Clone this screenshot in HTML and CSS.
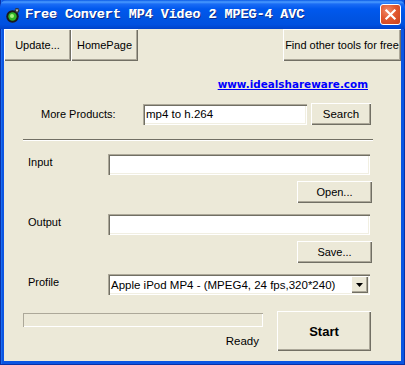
FILE: index.html
```html
<!DOCTYPE html>
<html lang="en">
<head>
  <meta charset="UTF-8">
  <title>Free Convert MP4 Video 2 MPEG-4 AVC</title>
  <link rel="stylesheet" href="styles.css">
</head>
<body>
  <div class="window">
    <div class="title-bar">
      <svg class="app-icon" width="16" height="16" viewBox="0 0 16 16">
        <circle cx="7.5" cy="9.5" r="6.2" fill="#1a1a1a"/>
        <circle cx="7.5" cy="9.5" r="4.2" fill="#2fb52a"/>
        <circle cx="7" cy="9" r="2" fill="#a6f27e"/>
        <circle cx="12" cy="3.5" r="2.4" fill="#333"/>
        <path d="M10.5 2.5 L13.5 2.5 L12 5 Z" fill="#c9c9c9"/>
      </svg>
      <span class="title-text">Free Convert MP4 Video 2 MPEG-4 AVC</span>
      <span class="close-btn">
        <svg width="21" height="21" viewBox="0 0 21 21">
          <path d="M6 6 L15 15 M15 6 L6 15" stroke="#fff" stroke-width="2.4" stroke-linecap="square"/>
        </svg>
      </span>
    </div>
    <div class="client">
      <div class="toolbar">
        <button class="btn tb-update">Update...</button>
        <button class="btn tb-home">HomePage</button>
        <button class="btn tb-find">Find other tools for free</button>
      </div>
      <div class="link-row">
        <a class="site-link" href="#">www.idealshareware.com</a>
      </div>
      <div class="products-row">
        <span class="products-label">More Products:</span>
        <div class="field products-field">mp4 to h.264</div>
        <button class="btn search-btn">Search</button>
      </div>
      <div class="separator"></div>

      <div class="file-row">
        <span class="row-label">Input</span>
        <div class="field file-field"></div>
      </div>
      <div class="action-row">
        <button class="btn action-btn">Open...</button>
      </div>

      <div class="file-row gap-top">
        <span class="row-label">Output</span>
        <div class="field file-field"></div>
      </div>
      <div class="action-row">
        <button class="btn action-btn">Save...</button>
      </div>

      <div class="file-row gap-top">
        <span class="row-label">Profile</span>
        <div class="field select-field">
          <span class="select-text">Apple iPod MP4 - (MPEG4, 24 fps,320*240)</span>
          <span class="select-arrow">
            <svg width="7" height="4" viewBox="0 0 7 4"><path d="M0 0 H7 L3.5 4 Z" fill="#000"/></svg>
          </span>
        </div>
      </div>

      <div class="bottom-row">
        <div class="status-col">
          <div class="progress"></div>
          <div class="status-text">Ready</div>
        </div>
        <button class="btn start-btn">Start</button>
      </div>
    </div>
  </div>
</body>
</html>
```

FILE: styles.css
```css
body {
  margin: 0;
  background: #fff;
  font-family: "Liberation Sans", Arial, sans-serif;
  font-size: 11px;
  color: #000;
}
.window {
  width: 405px;
  height: 365px;
  background: #0b55e2;
  box-shadow: inset 1px 0 #0831a8, inset -1px 0 #0831a8, inset 0 -1px #0831a8, inset 2px 0 #1a6cf0;
  display: flex;
  flex-direction: column;
}
.title-bar {
  height: 29px;
  flex: none;
  display: flex;
  align-items: center;
  padding: 0 5px 0 5px;
  background: linear-gradient(to bottom, #0a5ae6 0, #4a9bff 2px, #1a6cf5 4px, #0058ee 9px, #0054e3 60%, #0050e0 85%, #0042c9 100%);
  border-radius: 7px 7px 0 0;
  user-select: none;
}
.app-icon {
  flex: none;
  margin-top: 1px;
}
.title-text {
  margin-left: 4px;
  font-family: "Liberation Mono", "Courier New", monospace;
  font-weight: bold;
  font-size: 13.3px;
  color: #fff;
  text-shadow: 1px 1px 0 #0a2a8a, 0.5px 0 0 #fff;
  white-space: nowrap;
}
.close-btn {
  margin-left: auto;
  margin-right: -1px;
  margin-top: -1px;
  width: 21px;
  height: 21px;
  border: 1px solid #fff;
  border-radius: 3px;
  background: radial-gradient(circle at 35% 30%, #f08a6a 0, #e2582f 45%, #c8401c 100%);
  display: flex;
  box-sizing: border-box;
  align-items: center;
  justify-content: center;
}
.close-btn svg {
  width: 19px;
  height: 19px;
}
.client {
  flex: 1;
  margin: 0 4px 4px 4px;
  background: #ece9d8;
  display: flex;
  flex-direction: column;
}
.btn {
  font-family: "Liberation Sans", Arial, sans-serif;
  font-size: 11px;
  color: #000;
  background: #ece9d8;
  border: none;
  margin: 0;
  padding: 0;
  box-shadow: inset 1px 1px #fff, inset -1px -1px #716f64, inset -2px -2px #aca899;
  cursor: default;
}
.toolbar {
  display: flex;
  height: 32px;
  flex: none;
}
.toolbar .btn {
  height: 32px;
}
.tb-update {
  width: 67px;
}
.tb-home {
  width: 67px;
}
.tb-find {
  width: 118px;
  margin-left: auto;
}
.link-row {
  display: flex;
  justify-content: flex-end;
  padding-right: 33px;
  margin-top: 16px;
  line-height: 14px;
}
.site-link {
  font-family: "DejaVu Sans", Verdana, sans-serif;
  font-weight: bold;
  font-size: 10.4px;
  color: #0000ff;
  text-decoration: underline;
}
.products-row {
  display: flex;
  align-items: center;
  height: 22px;
  margin-top: 12px;
  padding-left: 37px;
}
.products-label {
  width: 102px;
  flex: none;
}
.field {
  background: #fff;
  box-sizing: border-box;
  box-shadow: inset 1px 1px #aca899, inset 2px 2px #716f64, inset -1px -1px #fff, inset -2px -2px #f1efe2;
  display: flex;
  align-items: center;
  padding-left: 3px;
}
.products-field {
  width: 164px;
  height: 21px;
  font-size: 11.5px;
}
.search-btn {
  width: 60px;
  height: 22px;
  margin-left: 4px;
  font-size: 11.5px;
}
.separator {
  margin: 14px 0 0 19px;
  width: 350px;
  height: 0;
  border-top: 1px solid #716f64;
  border-bottom: 1px solid #fff;
}
.file-row {
  display: flex;
  align-items: center;
  height: 21px;
  margin-top: 13px;
  padding-left: 24px;
}
.file-row.gap-top {
  margin-top: 11px;
}
.row-label {
  width: 80px;
  flex: none;
  margin-top: -5px;
}
.file-field {
  width: 262px;
  height: 21px;
}
.action-row {
  display: flex;
  justify-content: flex-end;
  padding-right: 29px;
  margin-top: 6px;
}
.action-btn {
  width: 75px;
  height: 22px;
}
.select-field {
  width: 262px;
  height: 21px;
  padding: 0 2px 0 3px;
  font-size: 11.5px;
}
.select-text {
  flex: 1;
  white-space: nowrap;
}
.select-arrow {
  width: 17px;
  height: 17px;
  flex: none;
  display: flex;
  align-items: center;
  justify-content: center;
  background: #ece9d8;
  box-shadow: inset 1px 1px #fff, inset -1px -1px #716f64, inset -2px -2px #aca899;
}
.bottom-row {
  display: flex;
  align-items: flex-start;
  margin-top: 16px;
}
.status-col {
  width: 240px;
  margin-left: 19px;
  padding-top: 2px;
  flex: none;
}
.progress {
  height: 14px;
  box-sizing: border-box;
  box-shadow: inset 1px 1px #aca899, inset -1px -1px #fff;
}
.status-text {
  text-align: right;
  padding-right: 4px;
  margin-top: 7px;
  line-height: 14px;
  font-size: 11.5px;
}
.start-btn {
  width: 94px;
  height: 40px;
  margin-left: 14px;
  font-weight: bold;
  font-size: 13px;
}
```
